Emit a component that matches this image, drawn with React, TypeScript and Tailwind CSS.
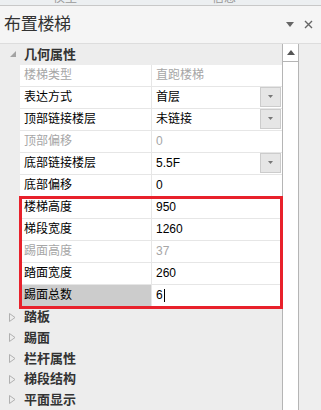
import React from "react";

type Row = {
	name: string;
	value: string;
	disabled?: boolean;
	dropdown?: boolean;
	selected?: boolean;
	caret?: boolean;
};

const topRows: Row[] = [
	{ name: "楼梯类型", value: "直跑楼梯", disabled: true },
	{ name: "表达方式", value: "首层", dropdown: true },
	{ name: "顶部链接楼层", value: "未链接", dropdown: true },
	{ name: "顶部偏移", value: "0", disabled: true },
	{ name: "底部链接楼层", value: "5.5F", dropdown: true },
	{ name: "底部偏移", value: "0" },
];

const boxRows: Row[] = [
	{ name: "楼梯高度", value: "950" },
	{ name: "梯段宽度", value: "1260" },
	{ name: "踢面高度", value: "37", disabled: true },
	{ name: "踏面宽度", value: "260" },
	{ name: "踢面总数", value: "6", selected: true, caret: true },
];

const groups = ["踏板", "踢面", "栏杆属性", "梯段结构", "平面显示"];

function PropRow({ row }: { row: Row }) {
	const tone = row.disabled ? "text-[#a6a6a6]" : "text-black";
	return (
		<div className="flex h-[22px] border-b border-[#e6e6e6] bg-white">
			<div
				className={`w-[132px] shrink-0 flex items-center pl-1 border-r border-[#e6e6e6] ${tone} ${
					row.selected ? "bg-[#cccccc]" : ""
				}`}>
				{row.name}
			</div>
			<div className={`flex-1 flex items-center pl-1 ${tone}`}>
				<span>{row.value}</span>
				{row.caret && <span className="inline-block w-px h-[13px] bg-black ml-px" />}
				{row.dropdown && (
					<div className="ml-auto mr-px w-[21px] h-[20px] -mt-px bg-[#e6e6e6] border border-[#cccccc] flex items-center justify-center">
						<svg width="5" height="3" viewBox="0 0 5 3">
							<path d="M0 0h5L2.5 3z" fill="#777" />
						</svg>
					</div>
				)}
			</div>
		</div>
	);
}

function GroupHeader({ label, open }: { label: string; open?: boolean }) {
	return (
		<div className="h-[22px] flex items-center">
			<div className="w-[24px] shrink-0 flex justify-center pl-[1px]">
				{open ? (
					<svg width="6" height="6" viewBox="0 0 6 6">
						<path d="M6 0V6H0z" fill="#a3a3a3" />
					</svg>
				) : (
					<svg width="7" height="9" viewBox="0 0 7 9">
						<path d="M0.5 0.5L6 4.5L0.5 8.5z" fill="none" stroke="#b0b0b0" />
					</svg>
				)}
			</div>
			<span className="text-[13px] font-bold text-[#333]">{label}</span>
		</div>
	);
}

export default function App() {
	return (
		<div
			className="w-[321px] h-[410px] overflow-hidden flex flex-col bg-[#ededed] text-[12px]"
			style={{ fontFamily: '"Liberation Sans", "Noto Sans CJK SC", sans-serif' }}>
			<div className="h-[6px] shrink-0 overflow-hidden bg-[#eceff1] border-b border-[#c8c8c8] flex text-[12px] text-[#999]">
				<span className="-mt-[11px] ml-[53px]">模型</span>
				<span className="-mt-[11px] ml-[135px]">信息</span>
			</div>
			<div className="h-[38px] shrink-0 bg-[#f5f5f5] border-b border-[#dddddd] flex items-center pl-1 pr-[8px]">
				<span className="text-[17px] text-[#333] tracking-[-0.3px]">布置楼梯</span>
				<div className="ml-auto flex items-center gap-[10px]">
					<svg width="8" height="5" viewBox="0 0 8 5">
						<path d="M0 0h8L4 5z" fill="#666" />
					</svg>
					<svg width="9" height="9" viewBox="0 0 9 9">
						<path d="M1 1l7 7M8 1l-7 7" stroke="#666" strokeWidth="1.4" />
					</svg>
				</div>
			</div>
			<div className="flex-1 flex min-h-0">
				<div className="w-[282px] shrink-0 flex flex-col">
					<GroupHeader label="几何属性" open />
					<div className="ml-[20px]">
						{topRows.map((r) => (
							<PropRow key={r.name} row={r} />
						))}
						<div className="relative">
							{boxRows.map((r) => (
								<PropRow key={r.name} row={r} />
							))}
							<div className="absolute -top-[1px] -bottom-[2px] -left-[1px] -right-[1px] border-[3px] border-[#e8212b] pointer-events-none" />
						</div>
					</div>
					{groups.map((g) => (
						<GroupHeader key={g} label={g} />
					))}
				</div>
				<div className="w-[17px] shrink-0 bg-white border-x border-[#b5b5b5] flex flex-col">
					<div className="h-[18px] border-b border-[#b5b5b5] flex items-center justify-center">
						<svg width="8" height="5" viewBox="0 0 8 5">
							<path d="M4 0L8 5H0z" fill="#555" />
						</svg>
					</div>
				</div>
				<div className="flex-1 bg-[#eeeeee]" />
			</div>
		</div>
	);
}
